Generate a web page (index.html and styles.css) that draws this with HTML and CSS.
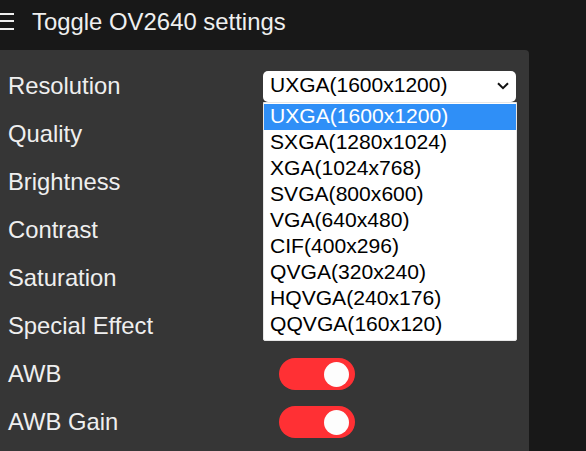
FILE: index.html
```html
<!DOCTYPE html>
<html lang="en">
<head>
<meta charset="utf-8">
<title>OV2640 settings</title>
<link rel="stylesheet" href="styles.css">
</head>
<body>
<header class="topbar">
  <svg class="menu-icon" width="14" height="32" viewBox="0 0 14 32" aria-hidden="true">
    <rect x="0" y="7" width="14" height="2" fill="#efefef"/>
    <rect x="0" y="14" width="14" height="2" fill="#efefef"/>
    <rect x="0" y="22" width="14" height="2" fill="#efefef"/>
  </svg>
  <span class="title">Toggle OV2640 settings</span>
</header>
<main class="panel">
  <div class="row">
    <span class="label">Resolution</span>
    <div class="select-wrap">
      <div class="select">
        <span>UXGA(1600x1200)</span>
        <svg class="chevron" width="12" height="8" viewBox="0 0 12 8" aria-hidden="true">
          <path d="M1 1.2 L6 6.2 L11 1.2" fill="none" stroke="#111" stroke-width="2"/>
        </svg>
      </div>
      <ul class="dropdown">
        <li class="option selected">UXGA(1600x1200)</li>
        <li class="option">SXGA(1280x1024)</li>
        <li class="option">XGA(1024x768)</li>
        <li class="option">SVGA(800x600)</li>
        <li class="option">VGA(640x480)</li>
        <li class="option">CIF(400x296)</li>
        <li class="option">QVGA(320x240)</li>
        <li class="option">HQVGA(240x176)</li>
        <li class="option">QQVGA(160x120)</li>
      </ul>
    </div>
  </div>
  <div class="row"><span class="label">Quality</span></div>
  <div class="row"><span class="label">Brightness</span></div>
  <div class="row"><span class="label">Contrast</span></div>
  <div class="row"><span class="label">Saturation</span></div>
  <div class="row"><span class="label">Special Effect</span></div>
  <div class="row"><span class="label">AWB</span><span class="toggle"><span class="knob"></span></span></div>
  <div class="row"><span class="label">AWB Gain</span><span class="toggle"><span class="knob"></span></span></div>
</main>
</body>
</html>
```
FILE: styles.css
```css
html, body {
  margin: 0;
  padding: 0;
  background: #181818;
  color: #efefef;
  font-family: "Liberation Sans", Arial, sans-serif;
  overflow: hidden;
}

.topbar {
  height: 50px;
  box-sizing: border-box;
  padding-top: 6px;
  display: flex;
  align-items: flex-start;
  line-height: 32px;
  font-size: 23.9px;
}

.menu-icon {
  display: block;
  flex: none;
}

.title {
  margin-left: 18px;
}

.panel {
  width: 529px;
  min-height: 420px;
  background: #363636;
  border-top-right-radius: 4px;
  padding-top: 12px;
  box-sizing: border-box;
}

.row {
  height: 48px;
  display: flex;
  align-items: center;
}

.label {
  width: 263px;
  padding-left: 8px;
  box-sizing: border-box;
  font-size: 23.8px;
  flex: none;
}

.select-wrap {
  position: relative;
}

.select {
  width: 253px;
  height: 31px;
  box-sizing: border-box;
  background: #fff;
  color: #000;
  border-radius: 5px;
  padding: 0 7px 3px 7px;
  display: flex;
  align-items: center;
  justify-content: space-between;
  font-size: 21px;
}

.chevron {
  display: block;
  margin-top: 3px;
}

.dropdown {
  position: absolute;
  top: 31px;
  left: 0;
  width: 254px;
  box-sizing: border-box;
  margin: 0;
  padding: 1px 0 2px 0;
  list-style: none;
  background: #fff;
  border: 1px solid #e6e6e6;
  border-radius: 0 0 2px 2px;
  z-index: 2;
}

.option {
  height: 26px;
  box-sizing: border-box;
  padding: 1px 6px 3px 6px;
  line-height: 22px;
  font-size: 21.1px;
  color: #000;
}

.option.selected {
  background: #2f8ff7;
  color: #fff;
}

.toggle {
  position: relative;
  margin-left: 16px;
  width: 76px;
  height: 32px;
  border-radius: 16px;
  background: #ff3034;
  flex: none;
}

.knob {
  position: absolute;
  top: 4px;
  right: 6px;
  width: 25px;
  height: 25px;
  border-radius: 50%;
  background: #fdfdfd;
}
```
